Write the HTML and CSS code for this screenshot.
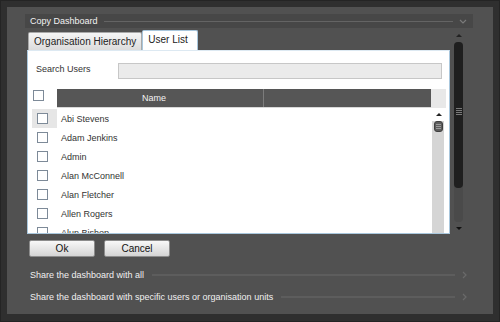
FILE: index.html
```html
<!DOCTYPE html>
<html>
<head>
<meta charset="utf-8">
<link rel="stylesheet" href="styles.css">
</head>
<body>
<div class="frame">
  <div class="panel">
    <div class="section-head">
      <span class="section-title">Copy Dashboard</span>
      <span class="rule"></span>
      <svg class="chev" width="8" height="5" viewBox="0 0 8 5"><path d="M1 1l3 3 3-3" stroke="#7a7a7a" stroke-width="1.2" fill="none"/></svg>
    </div>
    <div class="content">
      <div class="main">
        <div class="tabs">
          <div class="tab">Organisation Hierarchy</div>
          <div class="tab active">User List</div>
        </div>
        <div class="box">
          <div class="search">
            <span class="search-label">Search Users</span>
            <div class="search-input"></div>
          </div>
          <div class="grid">
            <div class="grid-head">
              <div class="head-cb"><span class="cb"></span></div>
              <div class="head-bar">
                <div class="col-name">Name</div>
                <div class="col-rest"></div>
              </div>
              <div class="head-sb"></div>
            </div>
            <div class="grid-body">
              <div class="rows">
                <div class="row sel"><div class="row-cb"><span class="cb"></span></div><div class="row-name">Abi Stevens</div></div>
                <div class="row"><div class="row-cb"><span class="cb"></span></div><div class="row-name">Adam Jenkins</div></div>
                <div class="row"><div class="row-cb"><span class="cb"></span></div><div class="row-name">Admin</div></div>
                <div class="row"><div class="row-cb"><span class="cb"></span></div><div class="row-name">Alan McConnell</div></div>
                <div class="row"><div class="row-cb"><span class="cb"></span></div><div class="row-name">Alan Fletcher</div></div>
                <div class="row"><div class="row-cb"><span class="cb"></span></div><div class="row-name">Allen Rogers</div></div>
                <div class="row"><div class="row-cb"><span class="cb"></span></div><div class="row-name">Alun Bishop</div></div>
              </div>
              <div class="vscroll">
                <div class="vs-up"><span class="tri-up"></span></div>
                <div class="vs-thumb"><span></span><span></span><span></span></div>
              </div>
            </div>
          </div>
        </div>
      </div>
      <div class="outer-scroll">
        <div class="os-up"><span class="tri-up dark"></span></div>
        <div class="os-track">
          <div class="os-thumb"><div class="grip"><span></span><span></span><span></span><span></span></div></div>
        </div>
        <div class="os-down"><span class="tri-down"></span></div>
      </div>
    </div>
    <div class="buttons">
      <button class="btn">Ok</button>
      <button class="btn">Cancel</button>
    </div>
    <div class="share">
      <div class="share-row">
        <span class="share-text">Share the dashboard with all</span>
        <span class="rule thick"></span>
        <svg class="chev-r" width="5" height="8" viewBox="0 0 5 8"><path d="M1 1l3 3-3 3" stroke="#6a6a6a" stroke-width="1.2" fill="none"/></svg>
      </div>
      <div class="share-row">
        <span class="share-text">Share the dashboard with specific users or organisation units</span>
        <span class="rule thick"></span>
        <svg class="chev-r" width="5" height="8" viewBox="0 0 5 8"><path d="M1 1l3 3-3 3" stroke="#6a6a6a" stroke-width="1.2" fill="none"/></svg>
      </div>
    </div>
  </div>
</div>
</body>
</html>
```

FILE: styles.css
```css
html, body {
  margin: 0;
  padding: 0;
}
body {
  width: 500px;
  height: 322px;
  overflow: hidden;
  background: #232323;
  font-family: "Liberation Sans", Arial, sans-serif;
}
.frame {
  box-sizing: border-box;
  width: 500px;
  height: 322px;
  border: 1px solid #242424;
  background: #2f2f2f;
  padding: 6px 6px 7px 6px;
}
.panel {
  box-sizing: border-box;
  height: 100%;
  background: #515151;
  padding: 7px 20px 0 18px;
}
.section-head {
  height: 14px;
  background: #474747;
  display: flex;
  align-items: center;
  padding: 0 6px 0 5px;
}
.section-title {
  color: #f2f2f2;
  font-size: 9px;
  line-height: 14px;
}
.rule {
  flex: 1;
  height: 1px;
  background: #646464;
  margin: 0 6px 0 6px;
}
.rule.thick {
  height: 2px;
  background: #5d5d5d;
  margin: 0 7px 0 8px;
}
.chev { display: block; }
.chev-r { display: block; }

.content {
  display: flex;
  margin: 2px 0 0 2px;
}
.main {
  width: 423px;
}
.tabs {
  height: 20px;
  display: flex;
  align-items: flex-end;
  padding-left: 1px;
}
.tab {
  height: 18px;
  box-sizing: border-box;
  padding: 0 5px;
  background: linear-gradient(#f5f5f5, #dcdcdc);
  border: 1px solid #a9a9a9;
  border-bottom: none;
  border-radius: 2px 2px 0 0;
  font-size: 10px;
  line-height: 18px;
  color: #222;
}
.tab.active {
  height: 20px;
  background: #fff;
  border-color: #a9c7dd;
  padding: 0 9px 0 5px;
  line-height: 18px;
}
.box {
  box-sizing: border-box;
  height: 184px;
  background: #fff;
  border: 1px solid #a9c7dd;
  border-top-color: #dde9f2;
}
.search {
  display: flex;
  align-items: flex-start;
  padding: 12px 7px 0 8px;
}
.search-label {
  width: 82px;
  font-size: 9px;
  line-height: 12px;
  color: #333;
}
.search-input {
  flex: 1;
  height: 16px;
  box-sizing: border-box;
  background: #ebebeb;
  border: 1px solid #c7c7c7;
}
.grid {
  margin: 10px 0 0 4px;
  width: 414px;
}
.grid-head {
  display: flex;
  height: 19px;
}
.head-cb {
  width: 25px;
  position: relative;
}
.head-cb .cb {
  position: absolute;
  top: 1px;
  left: 1px;
}
.cb {
  display: block;
  width: 11px;
  height: 11px;
  box-sizing: border-box;
  border: 1px solid #7d8a98;
  background: #fff;
}
.head-bar {
  width: 374px;
  display: flex;
  background: #565656;
  border-bottom: 1px solid #d8d8d8;
  box-sizing: border-box;
}
.col-name {
  width: 207px;
  border-right: 1px solid #7c7c7c;
  color: #f4f4f4;
  font-size: 9px;
  line-height: 18px;
  text-align: center;
  padding-right: 12px;
  box-sizing: border-box;
}
.col-rest { flex: 1; }
.head-sb {
  width: 15px;
  background: #e8e8e8;
}
.grid-body {
  display: flex;
  height: 125px;
  overflow: hidden;
}
.rows {
  width: 400px;
  padding-top: 1px;
}
.row {
  display: flex;
  align-items: center;
  height: 19px;
}
.row-cb {
  width: 25px;
  height: 19px;
  display: flex;
  align-items: center;
  padding-left: 5px;
  box-sizing: border-box;
}
.row.sel .row-cb { background: #e6e6e6; }
.row-name {
  padding-left: 4px;
  font-size: 9px;
  color: #333;
}
.vscroll {
  width: 12px;
  background: linear-gradient(#fff 0, #fff 13px, #d5d5d5 13px);
}
.vs-up {
  height: 13px;
  display: flex;
  justify-content: center;
  align-items: center;
  padding-left: 1px;
}
.tri-up {
  width: 0;
  height: 0;
  border-left: 3px solid transparent;
  border-right: 3px solid transparent;
  border-bottom: 3px solid #222;
}
.tri-down {
  width: 0;
  height: 0;
  border-left: 3px solid transparent;
  border-right: 3px solid transparent;
  border-top: 3px solid #111;
}
.vs-thumb {
  margin: 0 1px 0 2px;
  height: 11px;
  border-radius: 3px;
  background: #5c5c5c;
  border: 1px solid #3f3f3f;
  box-sizing: border-box;
  display: flex;
  flex-direction: column;
  justify-content: center;
  align-items: center;
  gap: 1px;
}
.vs-thumb span {
  width: 5px;
  height: 1px;
  background: #9a9a9a;
}
.outer-scroll {
  width: 9px;
  margin-left: 4px;
  height: 204px;
  display: flex;
  flex-direction: column;
}
.os-up {
  height: 11px;
  display: flex;
  justify-content: center;
  align-items: center;
}
.os-track {
  height: 180px;
  margin: 1px 0 0 0;
  background: #4a4a4a;
  border-radius: 4px;
}
.os-thumb {
  height: 146px;
  background: #1f1f1f;
  border-radius: 4px;
  display: flex;
  justify-content: center;
  padding-top: 66px;
  box-sizing: border-box;
}
.grip {
  display: flex;
  flex-direction: column;
  gap: 1px;
}
.grip span {
  width: 6px;
  height: 1px;
  background: #7a7a7a;
}
.os-down {
  flex: 1;
  display: flex;
  justify-content: center;
  align-items: center;
}
.buttons {
  display: flex;
  gap: 9px;
  margin: 6px 0 0 4px;
}
.btn {
  width: 66px;
  height: 17px;
  padding: 0;
  box-sizing: border-box;
  background: linear-gradient(#f8f8f8, #d4d4d4);
  border: 1px solid #8c8c8c;
  border-radius: 2px;
  font-family: "Liberation Sans", Arial, sans-serif;
  font-size: 10px;
  color: #111;
}
.share {
  margin: 7px 0 0 5px;
}
.share-row {
  display: flex;
  align-items: center;
  height: 22px;
  padding-right: 6px;
}
.share-text {
  font-size: 9px;
  color: #f0f0f0;
}
```
